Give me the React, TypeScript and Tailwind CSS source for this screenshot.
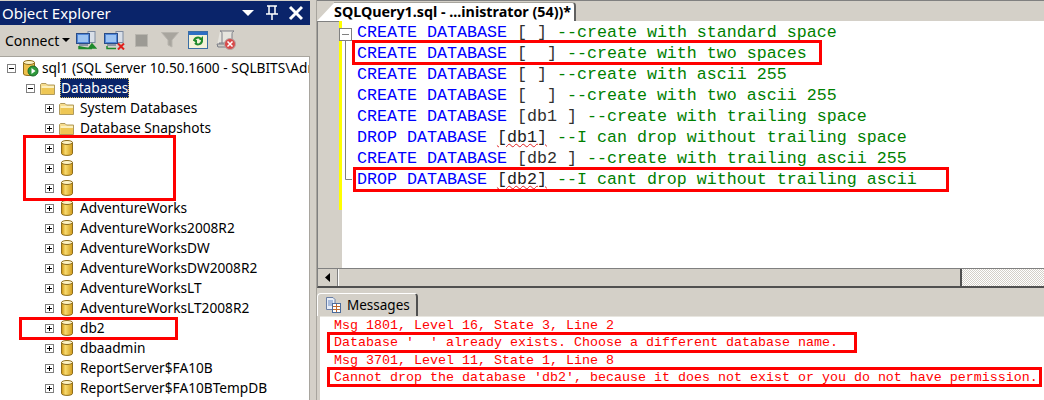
const sans = "font-['Noto_Sans',sans-serif]";

const databases = [
  '',
  '',
  '',
  'AdventureWorks',
  'AdventureWorks2008R2',
  'AdventureWorksDW',
  'AdventureWorksDW2008R2',
  'AdventureWorksLT',
  'AdventureWorksLT2008R2',
  'db2',
  'dbaadmin',
  'ReportServer$FA10B',
  'ReportServer$FA10BTempDB',
];

type Line = { kw: string; name: string; squiggle?: boolean; comment: string };

const lines: Line[] = [
  { kw: 'CREATE DATABASE ', name: '[ ]', comment: ' --create with standard space' },
  { kw: 'CREATE DATABASE ', name: '[  ]', comment: ' --create with two spaces' },
  { kw: 'CREATE DATABASE ', name: '[ ]', comment: ' --create with ascii 255' },
  { kw: 'CREATE DATABASE ', name: '[  ]', comment: ' --create with two ascii 255' },
  { kw: 'CREATE DATABASE ', name: '[db1 ]', comment: ' --create with trailing space' },
  { kw: 'DROP DATABASE ', name: '[db1]', squiggle: true, comment: ' --I can drop without trailing space' },
  { kw: 'CREATE DATABASE ', name: '[db2 ]', comment: ' --create with trailing ascii 255' },
  { kw: 'DROP DATABASE ', name: '[db2]', squiggle: true, comment: ' --I cant drop without trailing ascii' },
];

const messages = [
  'Msg 1801, Level 16, State 3, Line 2',
  "Database '  ' already exists. Choose a different database name.",
  'Msg 3701, Level 11, State 1, Line 8',
  "Cannot drop the database 'db2', because it does not exist or you do not have permission.",
];

const redBoxes = [
  'left-[23px] top-[135px] w-[153px] h-[66px]',
  'left-[19px] top-[317px] w-[159px] h-[23px]',
  'left-[352px] top-[40px] w-[470px] h-[25px]',
  'left-[353px] top-[167px] w-[596px] h-[25px]',
  'left-[327px] top-[332px] w-[530px] h-[21px]',
  'left-[327px] top-[367px] w-[715px] h-[20px]',
];

const Expander = ({ open }: { open?: boolean }) => (
  <svg width="9" height="9" viewBox="0 0 9 9" className="shrink-0">
    <rect x="0.5" y="0.5" width="8" height="8" fill="#fff" stroke="#808080" />
    <path d={open ? 'M2 4.5H7' : 'M2 4.5H7M4.5 2V7'} stroke="#000" />
  </svg>
);

const Folder = () => (
  <svg width="16" height="13" viewBox="0 0 16 13" className="shrink-0">
    <path d="M0.5 2.5 L1.5 1.5 H6 L7.5 3 H14.5 V12.5 H0.5 Z" fill="#f6dc8e" stroke="#b09a5c" />
    <rect x="1.5" y="4" width="12.5" height="8" fill="#eec755" />
    <rect x="1.5" y="4" width="12.5" height="2" fill="#fbf0c0" />
  </svg>
);

const Cylinder = () => (
  <svg width="12" height="16" viewBox="0 0 12 16" className="shrink-0">
    <defs>
      <linearGradient id="cyl" x1="0" x2="1" y1="0" y2="0">
        <stop offset="0" stopColor="#c98f10" />
        <stop offset="0.35" stopColor="#f8da6c" />
        <stop offset="1" stopColor="#d19c1e" />
      </linearGradient>
    </defs>
    <path d="M0.5 2.5 V13.5 C0.5 16 11.5 16 11.5 13.5 V2.5 Z" fill="url(#cyl)" stroke="#8e6d1c" />
    <ellipse cx="6" cy="2.5" rx="5.5" ry="2" fill="#fdf3c4" stroke="#8e6d1c" />
  </svg>
);

const ServerIcon = () => (
  <svg width="16" height="17" viewBox="0 0 16 17" className="shrink-0">
    <path d="M0.5 2.5 V14 C0.5 16 11.5 16 11.5 14 V2.5 Z" fill="#efc04a" stroke="#8e6d1c" />
    <ellipse cx="6" cy="2.5" rx="5.5" ry="2" fill="#fdf3c4" stroke="#8e6d1c" />
    <circle cx="10" cy="11" r="5" fill="#2f9a3c" stroke="#1a6a28" />
    <path d="M8.5 8 L12.5 11 L8.5 14 Z" fill="#fff" />
  </svg>
);

const Monitors = ({ badge }: { badge: 'arrow' | 'cross' }) => (
  <svg width="21" height="19" viewBox="0 0 21 19">
    <rect x="12" y="0.5" width="7" height="11" fill="#d9dfe8" stroke="#7d8aa0" />
    <rect x="0.5" y="2.5" width="13" height="10" fill="#4f86d8" stroke="#2a4c86" />
    <rect x="2" y="4" width="10" height="7" fill="#9cc3f2" />
    <rect x="3" y="13" width="9" height="2" fill="#8a94a6" />
    {badge === 'arrow' ? (
      <path d="M3 15 V17.5 H16 M16 13 L19.5 17 H13 Z" stroke="#1f8a2c" strokeWidth="1.5" fill="#1f8a2c" />
    ) : (
      <>
        <path d="M3 15 V17.5 H12" stroke="#1f8a2c" strokeWidth="1.5" fill="none" />
        <path d="M14 12.5 L20 18.5 M20 12.5 L14 18.5" stroke="#e0201c" strokeWidth="2" />
      </>
    )}
  </svg>
);

const StopIcon = () => (
  <svg width="13" height="13" viewBox="0 0 13 13">
    <rect x="0.5" y="0.5" width="12" height="12" fill="#9c9a94" stroke="#b8b5ae" />
  </svg>
);

const FilterIcon = () => (
  <svg width="18" height="16" viewBox="0 0 18 16">
    <path d="M0.5 0.5 H17.5 L11 8 V15 L7 13 V8 Z" fill="#a8a59e" stroke="#b8b5ae" />
  </svg>
);

const RefreshIcon = () => (
  <svg width="20" height="18" viewBox="0 0 20 18">
    <rect x="0.5" y="0.5" width="19" height="17" fill="#f4f1d8" stroke="#3a6ea5" />
    <rect x="1" y="1" width="18" height="3" fill="#2f6fc4" />
    <path d="M6 10 A4 4 0 0 1 13 8 M14 9 A4 4 0 0 1 7 12" stroke="#1f8a2c" strokeWidth="2" fill="none" />
    <path d="M11 9 H15 V5 Z M5 9 H9 V13 Z" fill="#1f8a2c" />
  </svg>
);

const ScriptStopIcon = () => (
  <svg width="20" height="20" viewBox="0 0 20 20">
    <path d="M4 1 H18 C16 2 16 3 16 5 V13 H3 C5 15 3 17 1 16 M4 1 C6 1 6 3 6 4 V13" fill="#e6e4de" stroke="#7c7f88" />
    <path d="M1 14 H12 V17 H2 Z" fill="#cfcdc6" stroke="#7c7f88" />
    <circle cx="14" cy="14" r="5.5" fill="#d84a4a" stroke="#b5a5a5" />
    <path d="M11.5 11.5 L16.5 16.5 M16.5 11.5 L11.5 16.5" stroke="#fff" strokeWidth="1.5" />
  </svg>
);

const MessagesIcon = () => (
  <svg width="15" height="16" viewBox="0 0 15 16" className="shrink-0">
    <path d="M0.5 0.5 H7 L9 2.5 V12.5 H0.5 Z" fill="#e8eef8" stroke="#6a7fa5" />
    <path d="M2 4 H7 M2 6 H7 M2 8 H7" stroke="#6a8ac0" />
    <rect x="6.5" y="6.5" width="8" height="9" fill="#fff" stroke="#4a6a9a" />
    <path d="M7 9.5 H14 M7 12.5 H14 M10.5 7 V15" stroke="#c06a30" />
  </svg>
);

const Row = ({ indent, children, open }: { indent: string; children: React.ReactNode; open?: boolean }) => (
  <div className={`flex items-center h-5 ${indent}`}>
    <Expander open={open} />
    {children}
  </div>
);

const ObjectExplorer = () => (
  <div className={`w-[310px] shrink-0 flex flex-col pt-px ${sans}`}>
    <div className="h-[24px] bg-[#0a246a] flex items-center pl-[2px] pr-[7px] text-white text-[15px]">
      <span className="flex-1">Object Explorer</span>
      <svg width="71" height="16" viewBox="0 0 71 16">
        <path d="M10 5 H22 L16 11 Z" fill="#fff" />
        <path d="M35 1 H45 M37 1 V9 M43 1 V9 M34 9 H46 M40 9 V15" stroke="#fff" strokeWidth="1.5" fill="none" />
        <path d="M58 2 L70 14 M70 2 L58 14" stroke="#fff" strokeWidth="3" />
      </svg>
    </div>
    <div className="h-[32px] flex items-center pl-[5px] pb-px text-[14px] text-black border-b border-[#a8a59e]">
      <span>Connect</span>
      <svg width="8" height="4" viewBox="0 0 8 4" className="ml-[3px]">
        <path d="M0 0 H8 L4 4 Z" fill="#000" />
      </svg>
      <div className="flex items-center ml-[6px] gap-[7px]">
        <Monitors badge="arrow" />
        <Monitors badge="cross" />
      </div>
      <div className="flex items-center ml-[10px] gap-[13px]">
        <StopIcon />
        <FilterIcon />
      </div>
      <div className="flex items-center ml-[9px] gap-[8px]">
        <RefreshIcon />
        <ScriptStopIcon />
      </div>
    </div>
    <div className="flex-1 bg-white pt-[1px] text-[13.7px] text-black overflow-hidden whitespace-nowrap border-r border-[#a8a59e]">
      <Row indent="pl-[7px]" open>
        <div className="ml-[7px] mr-[3px]">
          <ServerIcon />
        </div>
        <span>sql1 (SQL Server 10.50.1600 - SQLBITS\Administrator)</span>
      </Row>
      <Row indent="pl-[26px]" open>
        <div className="ml-[5px] mr-[4px]">
          <Folder />
        </div>
        <span className="bg-[#0a246a] text-white px-[1px] h-5 leading-5 outline-dotted outline-1 -outline-offset-1 outline-[#d8c060]">
          Databases
        </span>
      </Row>
      {['System Databases', 'Database Snapshots'].map((name) => (
        <Row key={name} indent="pl-[45px]">
          <div className="ml-[5px] mr-[5px]">
            <Folder />
          </div>
          <span>{name}</span>
        </Row>
      ))}
      {databases.map((name, i) => (
        <Row key={i} indent="pl-[45px]">
          <div className="ml-[7px] mr-[7px]">
            <Cylinder />
          </div>
          <span>{name}</span>
        </Row>
      ))}
    </div>
  </div>
);

const QueryEditor = () => (
  <div className="h-[247px] flex border-l border-[#808080]">
    <div className="w-[21px] shrink-0" />
    <div className="w-[3px] shrink-0 bg-[#ffff00] h-[189px]" />
    <div className="relative flex-1 bg-white font-['Liberation_Mono',monospace] text-[16.67px] leading-[21px] pt-px pl-[15px] whitespace-pre">
      {lines.map((line, i) => (
        <div key={i} className="h-[21px]">
          <span className="text-[#0000ff]">{line.kw}</span>
          <span
            className={
              line.squiggle
                ? 'text-[#202020] underline decoration-wavy decoration-[#e02020] decoration-1'
                : 'text-[#303030]'
            }
          >
            {line.name}
          </span>
          <span className="text-[#008000]">{line.comment}</span>
        </div>
      ))}
      <svg width="14" height="160" viewBox="0 0 14 160" className="absolute -left-[3px] top-[7px]">
        <rect x="0.5" y="0.5" width="12" height="12" fill="#fff" stroke="#808080" />
        <path d="M3 6.5 H10" stroke="#808080" />
        <path d="M6.5 13 V151.5 H13" stroke="#808080" fill="none" />
      </svg>
    </div>
  </div>
);

const ScrollBar = () => (
  <div className="h-[20px] flex border-l border-t border-[#808080] border-b-2 border-b-[#505050]">
    <div className="w-[20px] flex items-center justify-center border-r border-[#808080]">
      <svg width="6" height="9" viewBox="0 0 6 9">
        <path d="M5 0 V9 L0 4.5 Z" fill="#000" />
      </svg>
    </div>
    <div className="w-[624px] border-r-2 border-[#505050] border-l border-l-white" />
    <div className="flex-1 bg-[repeating-conic-gradient(#d4d0c8_0%_25%,#ffffff_0%_50%)] bg-[length:2px_2px]" />
  </div>
);

const MessagesPane = () => (
  <>
    <div className="h-[28px] flex items-end">
      <div className={`h-[23px] w-[101px] flex items-center gap-[6px] pl-[8px] text-[13.5px] text-black border-t border-l border-white border-r-2 border-r-[#505050] rounded-t-sm ${sans}`}>
        <MessagesIcon />
        <span>Messages</span>
      </div>
    </div>
    <div className="flex-1 ml-[3px] bg-white border-t border-[#e8e6e0] font-['Liberation_Mono',monospace] text-[13.33px] leading-[17px] text-[#ff0000] pl-[14px] whitespace-pre">
      {messages.map((msg) => (
        <div key={msg} className="h-[17.3px]">
          {msg}
        </div>
      ))}
    </div>
  </>
);

export default function App() {
  return (
    <div className="relative w-[1044px] h-[400px] overflow-hidden bg-[#d4d0c8] flex">
      <ObjectExplorer />
      <div className="w-[7px] shrink-0 border-r border-[#a8a59e]" />
      <div className="flex-1 flex flex-col border-t border-[#808080]">
        <div className="h-[21px] flex items-end border-b border-[#808080] -mb-px">
          <svg width="17" height="19" viewBox="0 0 17 19" className="shrink-0">
            <path d="M0 19 L17 1 V19 Z" fill="#ffffff" />
          </svg>
          <div className="h-[19px] w-[242px] bg-white border-t border-r-2 border-[#606060] border-t-[#a8a59e] rounded-tr-sm font-['Noto_Sans',sans-serif] font-bold text-[14.3px] leading-[18px] whitespace-nowrap text-black">
            SQLQuery1.sql - ...inistrator (54))*
          </div>
        </div>
        <QueryEditor />
        <ScrollBar />
        <MessagesPane />
      </div>
      {redBoxes.map((box) => (
        <div key={box} className={`absolute border-[3px] border-[#ff0000] ${box}`} />
      ))}
    </div>
  );
}
